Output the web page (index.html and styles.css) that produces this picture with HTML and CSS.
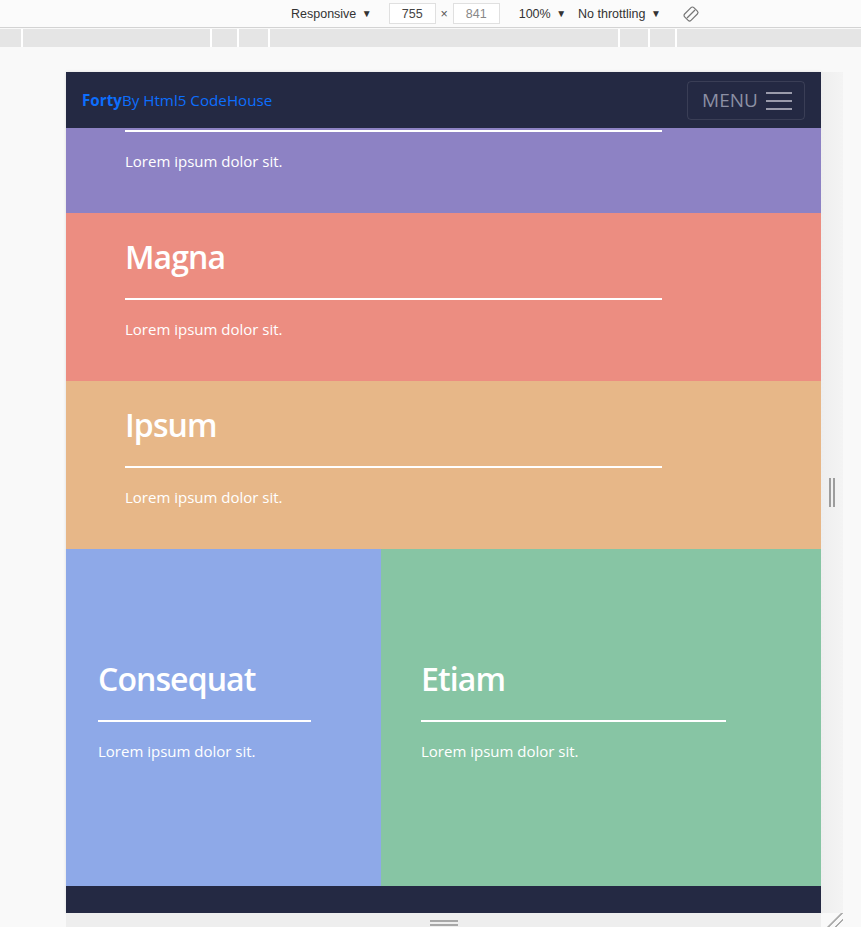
FILE: index.html
```html
<!DOCTYPE html>
<html lang="en">
<head>
<meta charset="utf-8">
<title>Forty</title>
<link rel="stylesheet" href="styles.css">
</head>
<body>
<div class="toolbar">
  <span class="tb-item tb-resp">Responsive <span class="caret">▼</span></span>
  <span class="tb-box">755</span>
  <span class="tb-x">×</span>
  <span class="tb-box tb-dim">841</span>
  <span class="tb-item tb-zoom">100% <span class="caret">▼</span></span>
  <span class="tb-item">No throttling <span class="caret">▼</span></span>
  <svg class="tb-rotate" width="18" height="18" viewBox="0 0 18 18"><g fill="none" stroke="#777" stroke-width="1.2"><rect x="4.5" y="2.5" width="9" height="13" rx="2" transform="rotate(45 9 9)"/><path d="M5 13 L13 5"/></g></svg>
</div>
<div class="ruler">
  <span class="tick t1"></span><span class="tick t2"></span><span class="tick t3"></span><span class="tick t4"></span><span class="tick t5"></span><span class="tick t6"></span><span class="tick t7"></span>
</div>
<div class="stage">
  <div class="device-row">
    <div class="frame">
      <header class="site-header">
        <a class="brand"><strong>Forty</strong>By Html5 CodeHouse</a>
        <button class="menu-btn">MENU
          <svg width="26" height="20" viewBox="0 0 26 20"><g fill="#9a9bab"><rect x="0" y="2" width="26" height="2"/><rect x="0" y="10" width="26" height="2"/><rect x="0" y="18" width="26" height="2"/></g></svg>
        </button>
      </header>
      <section class="band purple">
        <div class="rule"></div>
        <p>Lorem ipsum dolor sit.</p>
      </section>
      <section class="band salmon">
        <h2>Magna</h2>
        <div class="rule"></div>
        <p>Lorem ipsum dolor sit.</p>
      </section>
      <section class="band tan">
        <h2>Ipsum</h2>
        <div class="rule"></div>
        <p>Lorem ipsum dolor sit.</p>
      </section>
      <div class="tiles">
        <section class="tile blue">
          <h2>Consequat</h2>
          <div class="rule"></div>
          <p>Lorem ipsum dolor sit.</p>
        </section>
        <section class="tile green">
          <h2>Etiam</h2>
          <div class="rule"></div>
          <p>Lorem ipsum dolor sit.</p>
        </section>
      </div>
      <footer class="site-footer"></footer>
    </div>
    <div class="side-handle"><span></span><span></span></div>
  </div>
  <div class="bottom-row">
    <div class="bottom-handle"><span></span><span></span></div>
    <div class="corner"></div>
  </div>
</div>
</body>
</html>
```
FILE: styles.css
```css
* { box-sizing: border-box; }
html, body { margin: 0; padding: 0; }
body {
  width: 861px;
  height: 927px;
  overflow: hidden;
  background: #f9f9f9;
  font-family: "Open Sans", "Noto Sans", sans-serif;
}
.toolbar {
  height: 28px;
  background: #fbfbfb;
  border-bottom: 1px solid #d3d3d3;
  display: flex;
  align-items: center;
  padding-left: 291px;
  font-family: "Liberation Sans", "DejaVu Sans", sans-serif;
  font-size: 12.5px;
  color: #333;
}
.tb-item { white-space: nowrap; }
.caret { font-size: 10px; position: relative; top: -1px; margin-left: 2px; }
.tb-resp { margin-right: 17px; }
.tb-box {
  width: 47px;
  height: 21px;
  border: 1px solid #e0e0e0;
  background: #fff;
  display: flex;
  align-items: center;
  justify-content: center;
  color: #444;
}
.tb-dim { color: #888; }
.tb-x { width: 17px; text-align: center; color: #555; }
.tb-zoom { margin-left: 19px; margin-right: 12px; }
.tb-rotate { margin-left: 21px; }
.ruler {
  margin-top: 1px;
  height: 18px;
  background: #e5e5e5;
  position: relative;
}
.tick { position: absolute; top: 0; width: 2px; height: 18px; background: #fff; }
.t1 { left: 21px; } .t2 { left: 210px; } .t3 { left: 237px; } .t4 { left: 268px; }
.t5 { left: 618px; } .t6 { left: 648px; } .t7 { left: 675px; }
.stage { padding: 25px 0 0 66px; }
.device-row { display: flex; }
.frame {
  width: 755px;
  height: 841px;
  display: flex;
  flex-direction: column;
  box-shadow: 0 0 3px rgba(0,0,0,0.12);
  color: #fff;
}
.side-handle {
  width: 22px;
  background: linear-gradient(to right, #eeeeee, #f4f4f4);
  display: flex;
  justify-content: center;
  align-items: center;
  gap: 2px;
}
.side-handle span { width: 2px; height: 29px; background: #9d9d9d; }
.bottom-row { display: flex; width: 777px; height: 14px; }
.bottom-handle {
  width: 755px;
  height: 14px;
  background: #eeeeee;
  display: flex;
  flex-direction: column;
  align-items: center;
  padding-top: 7px;
  gap: 2px;
}
.bottom-handle span { width: 28px; height: 2px; background: #a8a8a8; }
.corner {
  width: 22px;
  background: linear-gradient(135deg, transparent 55%, #aaa 56%, #aaa 61%, transparent 62%, transparent 75%, #aaa 76%, #aaa 81%, transparent 82%);
}
.site-header {
  height: 56px;
  flex: none;
  background: #242943;
  display: flex;
  align-items: center;
  justify-content: space-between;
  padding: 0 16px;
}
.brand {
  color: #0d6efd;
  font-size: 15.2px;
}
.brand strong { font-weight: 700; }
.menu-btn {
  width: 118px;
  height: 39px;
  background: transparent;
  border: 1px solid rgba(255,255,255,0.1);
  border-radius: 4px;
  color: #8c90a4;
  font-family: "Open Sans", sans-serif;
  font-size: 19px;
  display: flex;
  align-items: center;
  justify-content: center;
  gap: 8px;
  padding: 0 0 0 2px;
}
.band { flex: none; padding-left: 59px; }
.band .rule { width: 537px; }
.rule { height: 2px; background: #fff; }
h2 {
  margin: 0 0 21px;
  font-size: 32px;
  line-height: 40px;
  font-weight: 600;
  letter-spacing: -0.9px;
}
p {
  margin: 17px 0 0;
  font-size: 15px;
  line-height: 24px;
}
.purple { background: #8d82c4; height: 85px; padding-top: 2px; }
.salmon { background: #ec8d81; height: 168px; padding-top: 24px; }
.tan { background: #e7b788; height: 168px; padding-top: 24px; }
.tiles { display: flex; height: 337px; flex: none; }
.tile {
  display: flex;
  flex-direction: column;
  justify-content: center;
  padding-bottom: 13px;
}
.blue { background: #8ea9e8; width: 315px; padding-left: 32px; }
.blue .rule { width: 213px; }
.green { background: #87c5a4; width: 440px; padding-left: 40px; }
.green .rule { width: 305px; }
.site-footer { flex: 1; background: #242943; }
```
